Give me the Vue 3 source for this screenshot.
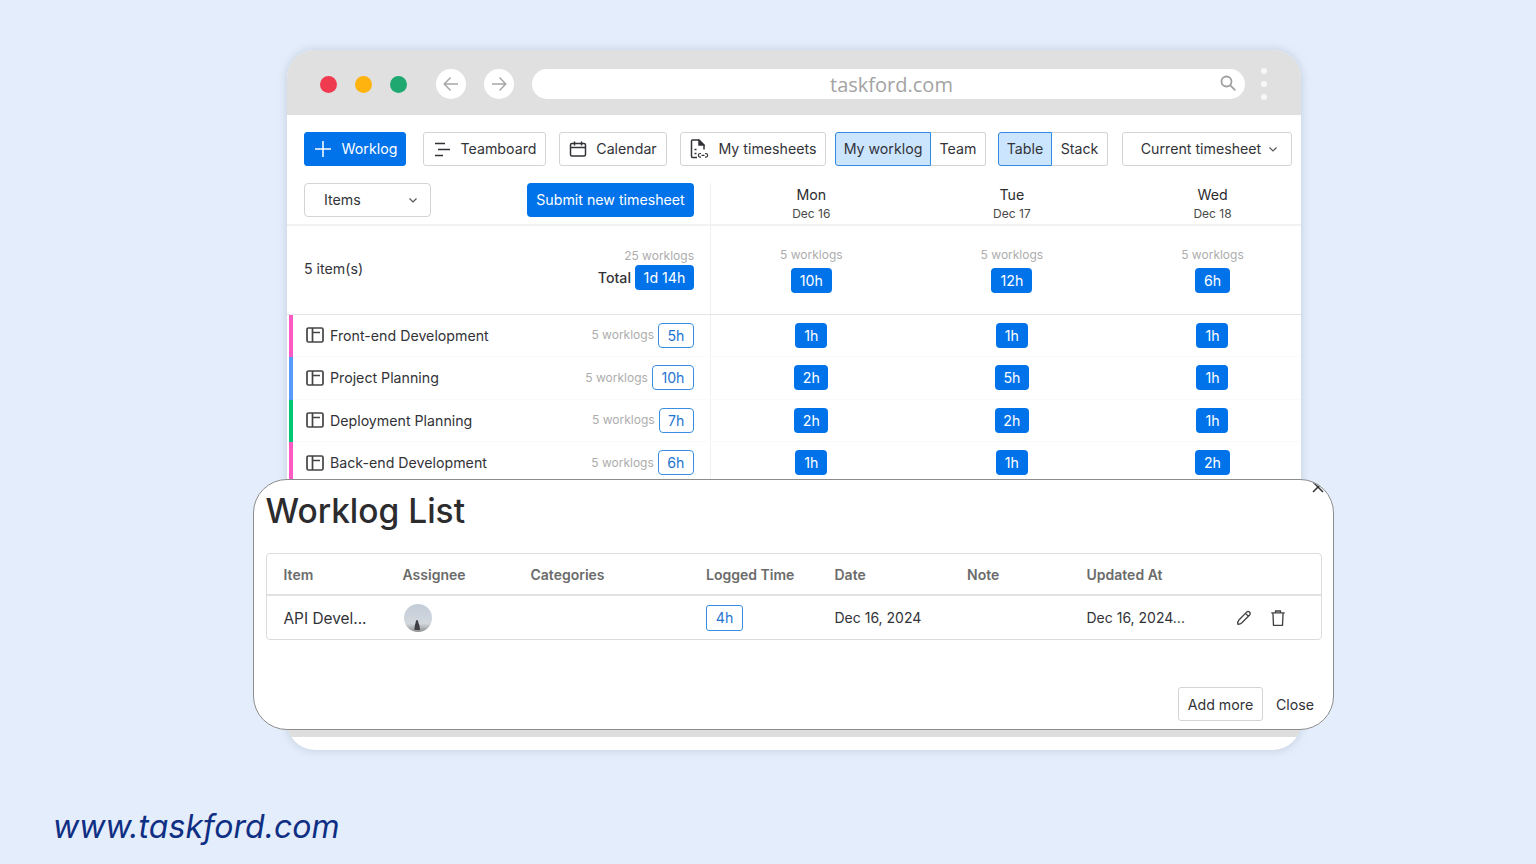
<script setup>
const days = [
  { name: 'Mon', date: 'Dec 16', total: '10h' },
  { name: 'Tue', date: 'Dec 17', total: '12h' },
  { name: 'Wed', date: 'Dec 18', total: '6h' }
]

const rows = [
  { name: 'Front-end Development', color: '#ff5ac4', total: '5h', cells: ['1h', '1h', '1h'] },
  { name: 'Project Planning', color: '#579bfc', total: '10h', cells: ['2h', '5h', '1h'] },
  { name: 'Deployment Planning', color: '#00c875', total: '7h', cells: ['2h', '2h', '1h'] },
  { name: 'Back-end Development', color: '#ff5ac4', total: '6h', cells: ['1h', '1h', '2h'] }
]

const columns = ['Item', 'Assignee', 'Categories', 'Logged Time', 'Date', 'Note', 'Updated At']
</script>

<template>
  <div class="page">
    <div class="browser">
      <header class="chrome">
        <span class="dot red"></span>
        <span class="dot yellow"></span>
        <span class="dot green"></span>
        <span class="nav">
          <svg viewBox="0 0 20 20" width="20" height="20"><path d="M17 10H3.500M9.500 3.500 3.300 10l6.200 6.500" /></svg>
        </span>
        <span class="nav">
          <svg viewBox="0 0 20 20" width="20" height="20"><path d="M3 10h13.500M10.500 3.500l6.200 6.500-6.200 6.500" /></svg>
        </span>
        <div class="address">
          <span class="url">taskford.com</span>
          <svg class="search" viewBox="0 0 18 18" width="18" height="18"><circle cx="7.500" cy="7.500" r="5" /><path d="m11.300 11.300 5 5" /></svg>
        </div>
        <div class="more"><i></i><i></i><i></i></div>
      </header>

      <div class="content">
        <div class="toolbar">
          <button class="btn primary w-worklog">
            <svg viewBox="0 0 20 20" width="20" height="20"><path d="M10 2v16M2 10h16" /></svg>
            Worklog
          </button>
          <button class="btn w-teamboard">
            <svg viewBox="0 0 18 18" width="18" height="18"><path d="M2 3.500h10M5 9.500h12M2 15.500h8" /></svg>
            Teamboard
          </button>
          <button class="btn w-calendar">
            <svg viewBox="0 0 18 18" width="18" height="18"><rect x="1.500" y="3.500" width="15" height="12.500" rx="1.500" /><path d="M1.500 7.500h15M5.500 1.500v4M12.500 1.500v4" /></svg>
            Calendar
          </button>
          <button class="btn w-sheets">
            <svg viewBox="0 0 20 20" width="20" height="20">
              <path d="M8 18.500H3.500a1 1 0 0 1-1-1V2a1 1 0 0 1 1-1h6.500l5 5v4.500M5.500 10.500h2M5.500 14.500h2" />
              <path d="M10 1.500v4.500h4.500z" fill="currentColor" />
              <path d="M12 14.500h-.8a1.800 1.800 0 0 0 0 3.600h.8M16 14.500h.8a1.800 1.800 0 0 1 0 3.600H16M12.500 16.300h3" stroke-width="1.200" />
            </svg>
            My timesheets
          </button>
          <div class="segment s-worklog">
            <button class="seg active sw-mine">My worklog</button>
            <button class="seg sw-team">Team</button>
          </div>
          <div class="segment s-view">
            <button class="seg active sw-table">Table</button>
            <button class="seg sw-stack">Stack</button>
          </div>
          <button class="btn w-current">
            Current timesheet
            <svg class="chev" viewBox="0 0 10 10" width="10" height="10"><path d="m1.500 3.500 3.500 3.500 3.500-3.500" /></svg>
          </button>
        </div>

        <div class="table">
          <div class="row head-row">
            <div class="left left-head">
              <div class="select">
                Items
                <svg class="chev" viewBox="0 0 10 10" width="10" height="10"><path d="m1.500 3.500 3.500 3.500 3.500-3.500" /></svg>
              </div>
              <button class="submit">Submit new timesheet</button>
            </div>
            <div v-for="day in days" :key="day.name" class="day">
              <div class="day-name">{{ day.name }}</div>
              <div class="day-date">{{ day.date }}</div>
            </div>
          </div>

          <div class="row summary-row">
            <div class="left left-summary">
              <span class="items-count">5 item(s)</span>
              <div class="summary-total">
                <div class="muted">25 worklogs</div>
                <div class="total-line"><b>Total</b><span class="badge total-badge">1d 14h</span></div>
              </div>
            </div>
            <div v-for="day in days" :key="day.name" class="day-summary">
              <div class="muted">5 worklogs</div>
              <span class="badge big">{{ day.total }}</span>
            </div>
          </div>

          <div v-for="item in rows" :key="item.name" class="row item-row">
            <div class="left left-item">
              <span class="stripe" :style="{ background: item.color }"></span>
              <svg class="board" viewBox="0 0 18 18" width="18" height="18"><rect x="1" y="2" width="16" height="14" rx="1.500" /><path d="M6.500 2v14M6.500 6.500H14" /></svg>
              <span class="item-name">{{ item.name }}</span>
              <span class="muted">5 worklogs</span>
              <span class="badge outline">{{ item.total }}</span>
            </div>
            <div v-for="(cell, i) in item.cells" :key="i" class="cell">
              <span class="badge">{{ cell }}</span>
            </div>
          </div>
        </div>
      </div>
      <div class="strip"></div>
    </div>

    <div class="modal">
      <svg class="close-x" viewBox="0 0 12 12" width="12" height="12"><path d="m1 1 10 10M11 1 1 11" /></svg>
      <h2>Worklog List</h2>
      <div class="list">
        <div class="list-row list-head">
          <span v-for="col in columns" :key="col">{{ col }}</span>
        </div>
        <div class="list-row list-body">
          <span class="api">API Devel...</span>
          <span>
            <svg class="avatar" viewBox="0 0 28 28" width="28" height="28">
              <defs>
                <linearGradient id="sky" x1="0" y1="0" x2="0" y2="1">
                  <stop offset="0" stop-color="#c3ccd8" />
                  <stop offset="0.7" stop-color="#d3d8de" />
                  <stop offset="1" stop-color="#8d8f90" />
                </linearGradient>
              </defs>
              <circle cx="14" cy="14" r="14" fill="url(#sky)" />
              <path d="M10.500 26c0-5 1-6 1.500-9 .3-1.500 1.700-1.500 2 0 .4 2.500 2 4 2 9z" fill="#3f3f44" />
            </svg>
          </span>
          <span></span>
          <span><span class="time">4h</span></span>
          <span>Dec 16, 2024</span>
          <span></span>
          <span class="updated">
            <span>Dec 16, 2024...</span>
            <svg class="act act-edit" viewBox="0 0 16 16" width="18" height="18"><path d="M2.500 13.500c-.3-1.500.2-2.800 1-3.700l6.800-7a1.800 1.800 0 0 1 2.700 2.500l-6.900 7c-1 .9-2.200 1.400-3.600 1.200zM9.300 3.900l2.700 2.600" /></svg>
            <svg class="act act-trash" viewBox="0 0 16 16" width="18" height="18"><path d="M2 3.500h12M5.800 3.500V1.800h4.400v1.700M3.500 3.500 4 14.500h8l.5-11" /></svg>
          </span>
        </div>
      </div>
      <div class="modal-foot">
        <button class="add-more">Add more</button>
        <span class="close-text">Close</span>
      </div>
    </div>

    <div class="site">www.taskford.com</div>
  </div>
</template>

<style>
html,
body {
  margin: 0;
  background: #e4edfb;
}
</style>

<style scoped>
.page {
  position: relative;
  width: 1536px;
  height: 864px;
  overflow: hidden;
  padding-top: 50px;
  box-sizing: border-box;
  background: #e4edfb;
  font-family: Inter, "Noto Sans", sans-serif;
  color: #323338;
}

svg {
  fill: none;
  stroke: currentColor;
  stroke-width: 1.5;
  flex: none;
}

button {
  font-family: inherit;
}

.browser {
  width: 1014px;
  height: 700px;
  margin-left: 287px;
  border-radius: 28px;
  overflow: hidden;
  background: #fff;
  display: flex;
  flex-direction: column;
  box-shadow: 0 0 7px 2px rgba(150, 165, 190, 0.3);
}

.chrome {
  height: 65px;
  flex: none;
  background: #e0e0e0;
  display: flex;
  align-items: center;
  padding: 3px 28px 0 33px;
  box-sizing: border-box;
}

.dot {
  width: 17px;
  height: 17px;
  border-radius: 50%;
  margin-right: 18px;
}
.red { background: #ef3a50; }
.yellow { background: #ffb30f; }
.green { background: #1fa971; margin-right: 29px; }

.nav {
  width: 30px;
  height: 30px;
  border-radius: 50%;
  background: #fff;
  color: #a6a6a6;
  display: flex;
  align-items: center;
  justify-content: center;
  margin-right: 18px;
}

.address {
  width: 713px;
  height: 30px;
  border-radius: 15px;
  background: #fff;
  position: relative;
  display: flex;
  align-items: center;
  justify-content: center;
}

.url {
  font-family: "Open Sans", sans-serif;
  font-size: 20px;
  color: #a3a3a3;
  margin-left: 6px;
  margin-top: 1px;
}

.search {
  position: absolute;
  right: 8px;
  top: 5px;
  color: #a0a0a0;
  stroke-width: 1.8;
}

.more {
  display: flex;
  flex-direction: column;
  gap: 7px;
  margin-left: 16px;
}
.more i {
  width: 6px;
  height: 6px;
  border-radius: 50%;
  background: #f7f7f7;
}

.content {
  flex: 1;
  min-height: 0;
}

.toolbar {
  display: flex;
  padding: 17px 0 0 17px;
  height: 34px;
}

.btn {
  height: 34px;
  box-sizing: border-box;
  border: 1px solid #d4d4d4;
  border-radius: 3px;
  background: #fff;
  color: #323338;
  font-size: 14.200px;
  display: flex;
  align-items: center;
  justify-content: center;
  gap: 9px;
  padding: 0 0 1px;
  white-space: nowrap;
}

.primary {
  background: #0073ea;
  border-color: #0073ea;
  color: #fff;
}

.w-worklog { width: 102px; margin-right: 17px; }
.w-teamboard { width: 123px; margin-right: 13px; gap: 10px; }
.w-calendar { width: 108px; margin-right: 13px; }
.w-sheets { width: 146px; margin-right: 9px; }
.w-current { width: 170px; gap: 5px; padding-left: 5px; }
.s-worklog { margin-right: 12px; }
.s-view { margin-right: 14px; }

.segment {
  display: flex;
  height: 34px;
}

.seg {
  height: 34px;
  box-sizing: border-box;
  padding: 0 0 1px;
  font-size: 14.200px;
  color: #323338;
  background: #fff;
  border: 1px solid #d4d4d4;
  border-left: 0;
  border-radius: 0 3px 3px 0;
  white-space: nowrap;
}

.seg.active {
  background: #cce5ff;
  border: 1px solid #2f8ae0;
  border-radius: 3px 0 0 3px;
}

.sw-mine { width: 96px; }
.sw-team { width: 55px; }
.sw-table { width: 54px; }
.sw-stack { width: 56px; }

.chev {
  color: #555;
  margin-left: 2px;
  stroke-width: 1.200;
}

.table {
  margin-top: 17px;
}

.row {
  display: grid;
  grid-template-columns: 424px repeat(3, 200.600px);
  width: 1027px;
}

.left {
  border-right: 1px solid #f0f0f0;
  box-sizing: border-box;
  display: flex;
  align-items: center;
}

.head-row {
  height: 43px;
  border-bottom: 2px solid #f2f2f2;
  box-sizing: border-box;
}

.left-head {
  padding: 0 16px 0 17px;
  justify-content: space-between;
  align-items: flex-start;
}

.select {
  width: 127px;
  height: 34px;
  box-sizing: border-box;
  border: 1px solid #d4d4d4;
  border-radius: 4px;
  display: flex;
  align-items: center;
  justify-content: space-between;
  padding: 0 12px 1px 19px;
  font-size: 14.200px;
}

.submit {
  width: 167px;
  height: 34px;
  border: 0;
  border-radius: 4px;
  background: #0073ea;
  color: #fff;
  font-size: 14.200px;
  padding: 0 0 1px;
  white-space: nowrap;
}

.day {
  text-align: center;
  padding-top: 3px;
}
.day-name {
  font-size: 14.200px;
  font-weight: 400;
  line-height: 18px;
  color: #2c2c30;
}
.day-date {
  font-size: 12px;
  line-height: 20px;
  color: #4a4a4a;
}

.summary-row {
  height: 88.500px;
  box-sizing: border-box;
  border-bottom: 1px solid #e4e4e4;
}

.left-summary {
  padding: 0 16px 0 17px;
  justify-content: space-between;
}

.items-count {
  font-size: 14.200px;
  margin-top: -2px;
}

.summary-total {
  text-align: right;
  margin-top: -2px;
}

.total-line {
  display: flex;
  align-items: center;
  justify-content: flex-end;
  gap: 4px;
  margin-top: 1px;
}
.total-line b {
  font-size: 14.200px;
  font-weight: 500;
}

.muted {
  font-size: 12px;
  color: #adadad;
  line-height: 16px;
  white-space: nowrap;
}

.badge {
  display: inline-flex;
  align-items: center;
  justify-content: center;
  height: 25px;
  min-width: 32px;
  padding: 0 8.500px;
  box-sizing: border-box;
  border-radius: 4px;
  background: #0073ea;
  color: #fff;
  font-size: 14.200px;
}

.total-badge {
  width: 59px;
  padding: 0;
}

.big {
  min-width: 34px;
  padding: 0 9px;
  margin-top: 5px;
}

.day-summary {
  display: flex;
  flex-direction: column;
  align-items: center;
  padding-top: 20.500px;
}

.item-row {
  height: 42.500px;
  border-bottom: 1px solid #fafafa;
  box-sizing: border-box;
}

.left-item {
  position: relative;
  padding: 0 16px 0 19px;
}

.stripe {
  position: absolute;
  left: 2px;
  top: 0;
  bottom: -1px;
  width: 4px;
}

.board {
  color: #444;
  stroke-width: 1.700;
}

.item-name {
  font-size: 14.200px;
  margin-left: 6px;
  flex: 1;
}

.outline {
  background: #fff;
  color: #1f76d2;
  border: 1.500px solid #3c8fe0;
  margin-left: 4px;
}

.cell {
  display: flex;
  align-items: center;
  justify-content: center;
}

.strip {
  flex: none;
  height: 20px;
  border-top: 7px solid #dedede;
  box-sizing: border-box;
}

.modal {
  position: absolute;
  left: 253px;
  top: 479px;
  width: 1081px;
  height: 251px;
  box-sizing: border-box;
  background: #fff;
  border: 1.500px solid #8c8c8c;
  border-radius: 34px;
  padding: 0 11px 0 11.500px;
  overflow: hidden;
}

.close-x {
  position: absolute;
  right: 9px;
  top: 1px;
  color: #333;
}

h2 {
  margin: 9px 0 0;
  font-size: 33.500px;
  line-height: 44px;
  font-weight: 500;
  color: #2c2c2e;
}

.list {
  margin-top: 20px;
  border: 1px solid #dcdcdc;
  border-radius: 4px;
}

.list-row {
  display: grid;
  grid-template-columns: 119px 128px 175.500px 128.500px 132.500px 119.500px 1fr;
  padding-left: 17px;
  align-items: center;
  font-size: 14px;
}

.list-head {
  height: 42px;
  box-sizing: border-box;
  border-bottom: 2px solid #e2e2e2;
  font-weight: 600;
  color: #6b6b6b;
}

.list-body {
  height: 43px;
  color: #323338;
}

.api {
  font-size: 15.400px;
  padding-top: 1px;
}

.avatar {
  stroke: none;
  display: block;
  margin-left: 1px;
}

.time {
  display: inline-flex;
  align-items: center;
  justify-content: center;
  width: 37px;
  height: 26px;
  box-sizing: border-box;
  border: 1.500px solid #3c8fe0;
  border-radius: 3px;
  color: #1f76d2;
  font-size: 14.200px;
}

.updated {
  display: flex;
  align-items: center;
}

.act {
  color: #444;
  stroke-width: 1.200;
}
.act-edit { margin-left: 50px; }
.act-trash { margin-left: 16px; }

.modal-foot {
  position: absolute;
  right: 19px;
  bottom: 8px;
  display: flex;
  align-items: center;
  font-size: 14.200px;
}

.add-more {
  width: 85px;
  height: 34px;
  border: 1px solid #d4d4d4;
  border-radius: 3px;
  background: #fff;
  color: #323338;
  font-size: 14.200px;
  padding: 0;
}

.close-text {
  margin-left: 13px;
}

.site {
  margin: 58px 0 0 53px;
  font-size: 32px;
  font-style: italic;
  line-height: 38px;
  letter-spacing: 0.050px;
  color: #0f2f84;
}
</style>
